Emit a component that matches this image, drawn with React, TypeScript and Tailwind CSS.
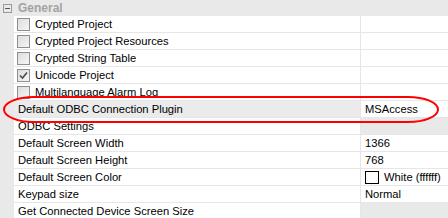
import React from 'react';

type Row = {
  name: string;
  check?: boolean;
  checked?: boolean;
  value?: React.ReactNode;
  greyName?: boolean;
  greyValue?: boolean;
};

const Check: React.FC<{ checked?: boolean }> = ({ checked }) => (
  <span className="w-[13px] h-[13px] border border-[#8f8f8f] bg-gradient-to-br from-[#dcdcdc] to-[#f6f6f6] flex items-center justify-center shrink-0">
    {checked && (
      <svg width="9" height="9" viewBox="0 0 9 9">
        <path d="M1 4.5 L3.5 7 L8 1.5" stroke="#4a4a4a" strokeWidth="1.6" fill="none" />
      </svg>
    )}
  </span>
);

const rows: Row[] = [
  { name: 'Crypted Project', check: true },
  { name: 'Crypted Project Resources', check: true },
  { name: 'Crypted String Table', check: true },
  { name: 'Unicode Project', check: true, checked: true },
  { name: 'Multilanguage Alarm Log', check: true },
  { name: 'Default ODBC Connection Plugin', value: 'MSAccess', greyName: true },
  { name: 'ODBC Settings', greyValue: true },
  { name: 'Default Screen Width', value: '1366' },
  { name: 'Default Screen Height', value: '768' },
  {
    name: 'Default Screen Color',
    value: (
      <span className="flex items-center gap-[5px]">
        <span className="w-[14px] h-[13px] border border-black bg-white" />
        White (ffffff)
      </span>
    ),
  },
  { name: 'Keypad size', value: 'Normal' },
  { name: 'Get Connected Device Screen Size', greyValue: true },
];

export default function App() {
  return (
    <div className="relative w-[448px] h-[218px] overflow-hidden bg-white text-[11.2px] leading-[15px] text-black" style={{ fontFamily: '"Liberation Sans", Arial, sans-serif' }}>
      <div className="h-[16px] bg-[#e9e9e9] flex items-center">
        <span className="ml-[3px] w-[9px] h-[9px] border border-[#9a9a9a] flex items-center justify-center">
          <span className="w-[5px] h-px bg-[#555]" />
        </span>
        <span className="ml-[6px] font-bold text-[#a3a3a3] text-[12px]">General</span>
      </div>
      {rows.map((r) => (
        <div key={r.name} className="flex h-[17px]">
          <div className="w-[14px] bg-[#e9e9e9] shrink-0" />
          <div className={`flex-1 flex items-center pt-px border-b border-[#e6e6e6] border-r ${r.greyName ? 'bg-[#ebebeb]' : ''}`}>
            {r.check ? (
              <>
                <span className="ml-[3px]"><Check checked={r.checked} /></span>
                <span className="ml-[5px] whitespace-nowrap">{r.name}</span>
              </>
            ) : (
              <span className="ml-[4px] whitespace-nowrap">{r.name}</span>
            )}
          </div>
          <div className={`w-[87px] shrink-0 flex items-center pt-px pl-[4px] border-b border-[#e6e6e6] whitespace-nowrap ${r.greyValue ? 'bg-[#e9e9e9]' : ''}`}>
            {r.value}
          </div>
        </div>
      ))}
      <svg className="absolute left-0 top-0 pointer-events-none" width="448" height="218">
        <rect x="4" y="97" width="434" height="25" rx="30" ry="12.5" fill="none" stroke="#ff0000" strokeWidth="2" />
      </svg>
    </div>
  );
}
